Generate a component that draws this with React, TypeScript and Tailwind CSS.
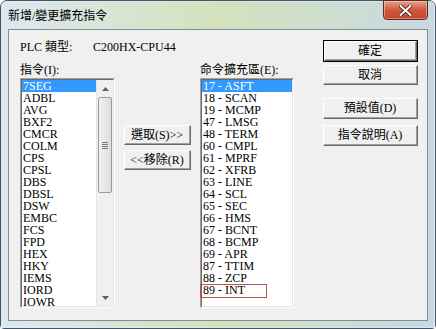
import React from "react";

const cjk = { fontFamily: '"Liberation Serif", "Noto Sans CJK TC", serif' } as React.CSSProperties;

const leftItems = ["7SEG","ADBL","AVG","BXF2","CMCR","COLM","CPS","CPSL","DBS","DBSL","DSW","EMBC","FCS","FPD","HEX","HKY","IEMS","IORD","IOWR"];
const rightItems = ["17 - ASFT","18 - SCAN","19 - MCMP","47 - LMSG","48 - TERM","60 - CMPL","61 - MPRF","62 - XFRB","63 - LINE","64 - SCL","65 - SEC","66 - HMS","67 - BCNT","68 - BCMP","69 - APR","87 - TTIM","88 - ZCP","89 - INT"];

function Btn({ label, def, className = "" }: { label: string; def?: boolean; className?: string }) {
  return (
    <div className={`${def ? "border border-black" : ""} ${className}`}>
      <div className="h-full border-t border-l border-white border-r border-b border-r-[#696969] border-b-[#696969]">
        <div className="h-full flex items-center justify-center bg-[#f0f0f0] border-r border-b border-r-[#a0a0a0] border-b-[#a0a0a0] text-[12px] leading-[12px] text-black" style={cjk}>
          {label}
        </div>
      </div>
    </div>
  );
}

function ListBox({ items, scroll, width, boxed }: { items: string[]; scroll?: boolean; width: string; boxed?: number }) {
  return (
    <div className={`${width} h-[230px] border-t border-l border-[#a0a0a0] border-r border-b border-r-white border-b-white`}>
      <div className="h-full flex border-t border-l border-[#696969] border-r border-b border-r-[#e3e3e3] border-b-[#e3e3e3] bg-white">
        <div className="flex-1 flex flex-col">
          {items.map((t, i) => (
            <div
              key={t}
              className={`h-[12px] leading-[12px] pl-[1px] text-[12px] whitespace-nowrap ${i === 0 ? "bg-[#3399ff] text-white" : "text-black"} ${boxed === i ? "relative" : ""}`}
              style={{ fontFamily: '"Liberation Serif", serif' }}
            >
              {t}
              {boxed === i && <div className="absolute left-[-2px] top-[0px] w-[67px] h-[14px] border border-[#c0504d]" />}
            </div>
          ))}
        </div>
        {scroll && (
          <div className="w-[17px] h-full bg-[#f0f0f0] flex flex-col border-l border-[#e6e6e6]">
            <div className="h-[17px] flex items-center justify-center">
              <svg width="7" height="4" viewBox="0 0 7 4"><path d="M0 4 L3.5 0 L7 4 Z" fill="#606060" /></svg>
            </div>
            <div className="h-[96px] mx-[1px] rounded-[2px] border border-[#9a9a9a] bg-gradient-to-r from-[#f2f2f2] to-[#dcdcdc] flex items-center justify-center">
              <div className="flex flex-col gap-[1px]">
                <div className="w-[6px] h-[1px] bg-[#7a7a7a]" />
                <div className="w-[6px] h-[1px] bg-[#7a7a7a]" />
                <div className="w-[6px] h-[1px] bg-[#7a7a7a]" />
                <div className="w-[6px] h-[1px] bg-[#7a7a7a]" />
              </div>
            </div>
            <div className="flex-1" />
            <div className="h-[17px] flex items-center justify-center">
              <svg width="7" height="4" viewBox="0 0 7 4"><path d="M0 0 L3.5 4 L7 0 Z" fill="#606060" /></svg>
            </div>
          </div>
        )}
      </div>
    </div>
  );
}

export default function App() {
  return (
    <div className="w-[436px] h-[329px] relative overflow-hidden bg-white">
      <div className="absolute inset-0 rounded-t-[7px] rounded-b-[4px] border border-[#44556a] bg-gradient-to-b from-[#c7d8e8] to-[#acc9e6]">
        <div className="h-full rounded-t-[6px] border border-[#e6eef5]/60 bg-gradient-to-r from-[#dde7ee] via-[#d3e2bc] to-[#c8d9e2] flex flex-col">
          {/* title bar */}
          <div className="h-[27px] shrink-0 flex items-center pl-[6px] relative">
            <span className="text-[12px] leading-[12px] text-black" style={cjk}>新增/變更擴充指令</span>
            <div className="absolute top-[-2px] right-[6px] w-[45px] h-[20px] rounded-b-[4px] border border-[#5a2a22] bg-gradient-to-b from-[#e8a08c] via-[#cf5a3e] to-[#c7442a] flex items-center justify-center shadow-[inset_0_0_0_1px_rgba(255,255,255,0.35)]">
              <svg width="13" height="11" viewBox="0 0 13 11">
                <path d="M1.5 1 L11.5 10 M11.5 1 L1.5 10" stroke="#3a1a14" strokeWidth="3.6" strokeLinecap="round" />
                <path d="M1.5 1 L11.5 10 M11.5 1 L1.5 10" stroke="#ffffff" strokeWidth="2" strokeLinecap="round" />
              </svg>
            </div>
          </div>
          {/* client area */}
          <div className="mx-[6px] h-[292px] border border-[#7f8c99] bg-[#f0f0f0] flex text-black">
            <div className="flex flex-col pl-[11px] pt-[11px] w-[285px]">
              <div className="h-[12px] flex text-[12px] leading-[12px]" style={cjk}>
                <span className="w-[73px]">PLC 類型:</span>
                <span>C200HX-CPU44</span>
              </div>
              <div className="mt-[11px] h-[12px] flex text-[12px] leading-[12px]" style={cjk}>
                <span className="w-[180px]">指令(I):</span>
                <span>命令擴充區(E):</span>
              </div>
              <div className="mt-[2px] flex">
                <ListBox items={leftItems} scroll width="w-[95px]" />
                <div className="ml-[9px] w-[67px] pt-[47px] flex flex-col gap-[5px]">
                  <Btn label="選取(S)>>" className="h-[20px]" />
                  <Btn label="<<移除(R)" className="h-[20px]" />
                </div>
                <div className="ml-[9px]">
                  <ListBox items={rightItems} width="w-[94px]" boxed={17} />
                </div>
              </div>
            </div>
            <div className="ml-[29px] w-[95px] pt-[10px] flex flex-col">
              <Btn label="確定" def className="h-[22px]" />
              <Btn label="取消" className="h-[20px] mt-[3px]" />
              <Btn label="預設值(D)" className="h-[21px] mt-[13px]" />
              <Btn label="指令說明(A)" className="h-[21px] mt-[6px]" />
            </div>
          </div>
        </div>
      </div>
    </div>
  );
}
